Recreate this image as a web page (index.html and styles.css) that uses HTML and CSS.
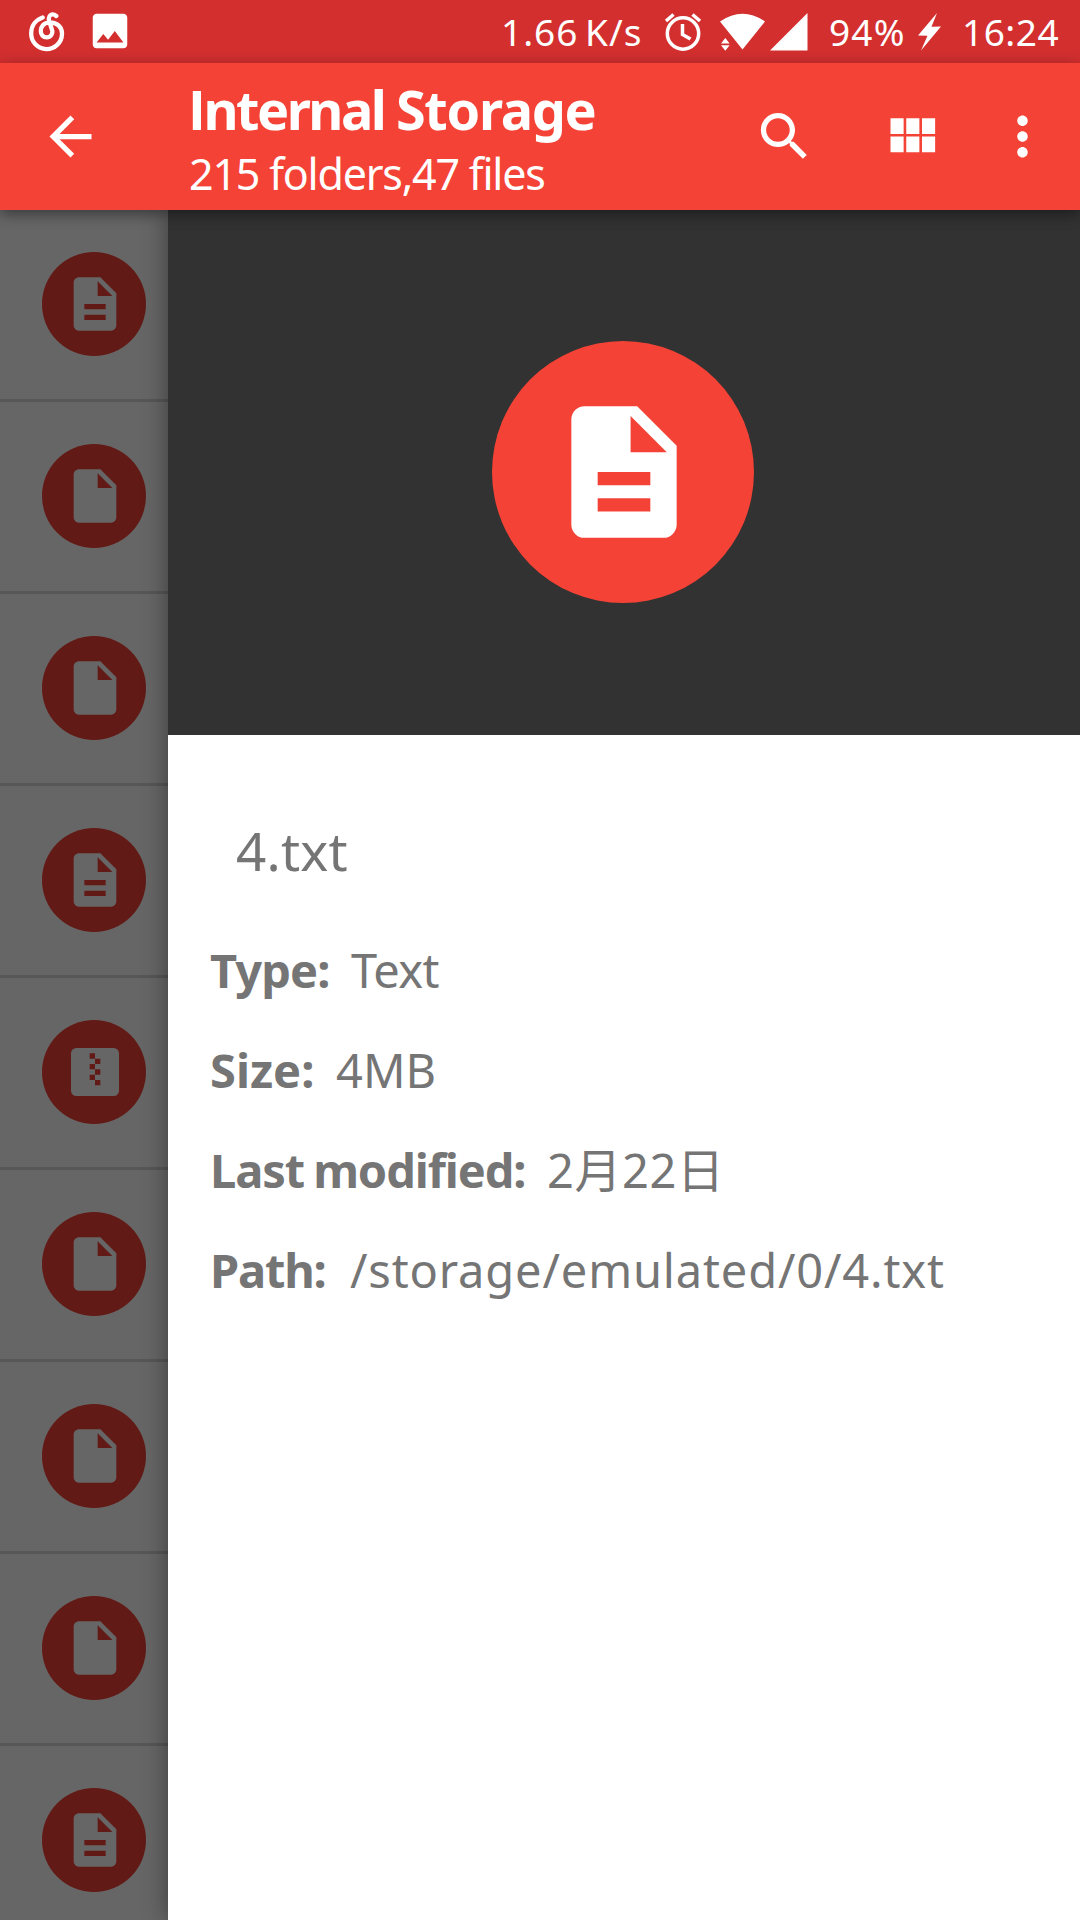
FILE: index.html
```html
<!DOCTYPE html>
<html lang="en">
<head>
<meta charset="utf-8">
<title>Internal Storage</title>
<link rel="stylesheet" href="styles.css">
</head>
<body>
<svg class="defs" width="0" height="0" aria-hidden="true">
  <symbol id="text-file" viewBox="0 0 24 24"><path d="M14 2H6c-1.1 0-2 .9-2 2v16c0 1.1.9 2 2 2h12c1.1 0 2-.9 2-2V8l-6-6zm2 16H8v-2h8v2zm0-4H8v-2h8v2zm-3-5V3.500L18.500 9H13z"/></symbol>
  <symbol id="file" viewBox="0 0 24 24"><path d="M14 2H6c-1.1 0-2 .9-2 2v16c0 1.1.9 2 2 2h12c1.1 0 2-.9 2-2V8l-6-6zm-1 7V3.500L18.500 9H13z"/></symbol>
  <symbol id="archive" viewBox="0 0 24 24"><path fill-rule="evenodd" d="M5 3h14a2 2 0 0 1 2 2v14a2 2 0 0 1-2 2H5a2 2 0 0 1-2-2V5a2 2 0 0 1 2-2zM10 5v2h2V5zM12 7v2h2V7zM10 9v2h2V9zM12 11v2h2v-2zM10 13v2h2v-2zM12 15v2h2v-2z"/></symbol>
</svg>
<div class="screen">
  <header class="status">
    <svg class="netease" viewBox="0 0 36 40"><path d="M13.700 5.500C6.500 8 2.200 14 2.200 21.300a15.400 15.400 0 0 0 30.800.8C33.300 15 27.500 10 20.500 10.300 15 10.500 11.800 14.500 11.800 19c0 4 2.500 6.300 5.900 6.300 4 0 6.200-3.200 5.500-6.800L20 8.500C18.800 3.500 23 .5 27.300 4"/></svg>
    <svg class="photo" viewBox="0 0 24 24"><path d="M21 19V5c0-1.100-.9-2-2-2H5c-1.100 0-2 .9-2 2v14c0 1.100.9 2 2 2h14c1.100 0 2-.9 2-2zM8.500 13.500l2.500 3.010L14.500 12l4.500 6H5l3.500-4.500z"/></svg>
    <span class="speed">1.66 K/s</span>
    <svg class="alarm" viewBox="0 0 38 40"><circle cx="19" cy="21.500" r="15.700"/><path d="M18.500 12v10.500l8 4.500M2 9l7.500-6.500M36 9l-7.500-6.500"/></svg>
    <svg class="wifi" viewBox="0 0 46 38"><path d="M0 8.500Q22.500-7 45 8.500L22.500 36.500zM1 30.500l4.300-5.500 4.300 5.500zM1 32.300h8.600L5.300 37.800z"/></svg>
    <svg class="signal" viewBox="0 0 38 38"><path d="M0 37.500L37.500 0v37.500z"/></svg>
    <span class="battery">94%</span>
    <svg class="bolt" viewBox="0 0 23 38"><path d="M19 0L0 22.500l9.500.2L3 37.500 23 13.500l-9.500.3z"/></svg>
    <span class="clock">16:24</span>
  </header>
  <div class="appbar">
    <svg class="icon back" viewBox="0 0 24 24"><path d="M20 11H7.830l5.590-5.590L12 4l-8 8 8 8 1.410-1.410L7.830 13H20v-2z"/></svg>
    <div class="heading">
      <h1><span class="cap-i">I</span>nternal <span class="wide">Storage</span></h1>
      <p>215 folders,47 files</p>
    </div>
    <svg class="icon search" viewBox="0 0 24 24"><path d="M15.500 14h-.79l-.28-.27C15.410 12.590 16 11.110 16 9.500 16 5.910 13.090 3 9.500 3S3 5.910 3 9.500 5.910 16 9.500 16c1.610 0 3.090-.59 4.230-1.570l.27.28v.79l5 4.990L20.490 19l-4.990-5zm-6 0C7.010 14 5 11.990 5 9.500S7.010 5 9.500 5 14 7.010 14 9.500 11.990 14 9.500 14z"/></svg>
    <svg class="icon grid" viewBox="0 0 24 24"><path d="M4 11h5V5H4v6zm0 7h5v-6H4v6zm6 0h5v-6h-5v6zm6 0h5v-6h-5v6zm-6-7h5V5h-5v6zm6-6v6h5V5h-5z"/></svg>
    <svg class="icon more" viewBox="0 0 24 24"><path d="M12 8c1.100 0 2-.9 2-2s-.9-2-2-2-2 .9-2 2 .9 2 2 2zm0 2c-1.100 0-2 .9-2 2s.9 2 2 2 2-.9 2-2-.9-2-2-2zm0 6c-1.100 0-2 .9-2 2s.9 2 2 2 2-.9 2-2-.9-2-2-2z"/></svg>
  </div>
  <main class="content">
    <ul class="files">
      <li><i class="badge"><svg><use href="#text-file"/></svg></i></li>
      <li><i class="badge"><svg><use href="#file"/></svg></i></li>
      <li><i class="badge"><svg><use href="#file"/></svg></i></li>
      <li><i class="badge"><svg><use href="#text-file"/></svg></i></li>
      <li><i class="badge"><svg><use href="#archive"/></svg></i></li>
      <li><i class="badge"><svg><use href="#file"/></svg></i></li>
      <li><i class="badge"><svg><use href="#file"/></svg></i></li>
      <li><i class="badge"><svg><use href="#file"/></svg></i></li>
      <li><i class="badge"><svg><use href="#text-file"/></svg></i></li>
    </ul>
    <section class="panel">
      <div class="hero"><i class="badge large"><svg><use href="#text-file"/></svg></i></div>
      <h2>4.txt</h2>
      <dl>
        <div class="type"><dt>Type:</dt><dd>Text</dd></div>
        <div class="size"><dt>Size:</dt><dd>4MB</dd></div>
        <div class="modified"><dt>Last modified:</dt><dd>2月22日</dd></div>
        <div class="path"><dt>Path:</dt><dd>/storage/emulated/0/4.txt</dd></div>
      </dl>
    </section>
  </main>
</div>
</body>
</html>
```
FILE: styles.css
```css
* { box-sizing: border-box; margin: 0; padding: 0; }
body { width: 1080px; height: 1920px; overflow: hidden; font-family: "Noto Sans", "Noto Sans CJK SC", sans-serif; background: #fff; }
svg { display: block; fill: currentColor; flex: none; }
.defs { position: absolute; }
.screen { display: flex; flex-direction: column; height: 1920px; }

.status { display: flex; height: 63px; background: #d32f2f; color: #fff; font-size: 37px; line-height: 64px; white-space: nowrap; }
.netease { width: 36px; height: 40px; margin: 12px 0 0 29px; fill: none; stroke: #fff; stroke-width: 4.300; stroke-linecap: round; }
.photo { width: 46px; height: 46px; margin: 8px 0 0 22px; }
.speed { width: 162px; margin-left: 368px; letter-spacing: 1px; word-spacing: -4px; }
.alarm { width: 38px; height: 40px; margin: 12px 0 0 1px; fill: none; stroke: #fff; stroke-width: 3.500; }
.wifi { width: 46px; height: 38px; margin: 13px 0 0 18px; }
.signal { width: 38px; height: 38px; margin: 13px 0 0 4px; }
.battery { width: 89px; margin-left: 21px; letter-spacing: 1.200px; }
.bolt { width: 23px; height: 38px; margin-top: 13px; }
.clock { margin-left: 21px; letter-spacing: .5px; }

.appbar { display: flex; align-items: center; height: 147px; background: #f44336; color: #fff; position: relative; z-index: 2; box-shadow: 0 4px 14px rgba(0,0,0,.45); }
.icon { width: 63px; height: 63px; }
.back { margin-left: 39px; }
.heading { width: 565px; margin-left: 86px; padding-top: 6px; white-space: nowrap; }
h1 { font-size: 54px; font-weight: 700; line-height: 64px; letter-spacing: -2.500px; }
.wide { letter-spacing: -1.300px; }
.cap-i { font-family: "Open Sans", sans-serif; }
.heading p { padding: 4px 0 0 1px; font-size: 43px; line-height: 58px; letter-spacing: -1.200px; }
.grid { margin-left: 64px; }
.more { margin-left: 48px; }

.content { display: flex; flex: 1; min-height: 0; }
.files { width: 168px; background: #666; overflow: hidden; list-style: none; }
.files li { display: flex; align-items: center; height: 192px; padding: 0 0 1px 42px; border-bottom: 3px solid #575757; }
.badge { display: flex; align-items: center; justify-content: center; flex: none; width: 104px; height: 104px; padding-left: 1px; border-radius: 50%; background: #611a16; color: #666; }
.badge svg { width: 64px; height: 64px; }

.panel { flex: 1; background: #fff; color: #757575; position: relative; box-shadow: 0 0 24px rgba(0,0,0,.42); }
.hero { display: flex; align-items: center; justify-content: center; height: 525px; padding: 0 2px 1px 0; background: #323232; }
.badge.large { width: 262px; height: 262px; padding: 0 0 0 2px; background: #f44336; color: #fff; }
.large svg { width: 158px; height: 158px; }
h2 { padding: 77px 0 0 68px; font-size: 53px; font-weight: 400; line-height: 78px; letter-spacing: .2px; }
dl { padding: 30px 0 0 42px; font-size: 47px; line-height: 100px; white-space: nowrap; }
dl div { display: flex; height: 100px; }
dt { font-weight: 700; }
.type dt { width: 141px; letter-spacing: -.9px; }
.type dd { letter-spacing: -.6px; }
.size dt { width: 126px; }
.modified dt { width: 337px; letter-spacing: -1.100px; word-spacing: -2px; }
.modified dd { letter-spacing: .6px; }
.path dt { width: 140px; letter-spacing: -1.200px; }
.path dd { letter-spacing: .85px; }
```
